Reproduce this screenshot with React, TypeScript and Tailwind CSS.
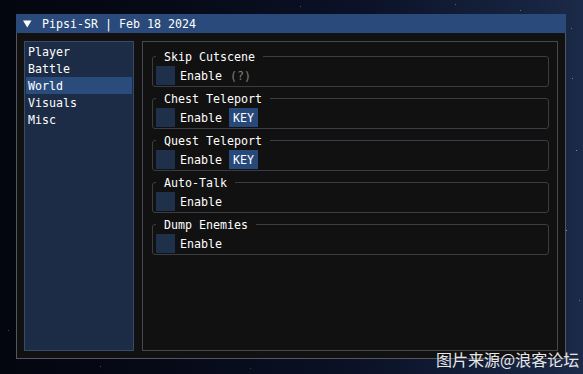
import React from "react";

const mono = { fontFamily: '"DejaVu Sans Mono", "Liberation Mono", monospace' };

const items = ["Player", "Battle", "World", "Visuals", "Misc"];

type Group = { title: string; extra?: "help" | "key" };
const groups: Group[] = [
  { title: "Skip Cutscene", extra: "help" },
  { title: "Chest Teleport", extra: "key" },
  { title: "Quest Teleport", extra: "key" },
  { title: "Auto-Talk" },
  { title: "Dump Enemies" },
];

const stars: [number, number, number][] = [
  [548, 52, 0.5], [572, 78, 0.4], [520, 10, 0.35], [576, 150, 0.45], [566, 230, 0.5],
  [579, 300, 0.35], [455, 4, 0.3], [300, 6, 0.25], [571, 28, 0.3], [8, 330, 0.25],
  [560, 340, 0.4], [100, 366, 0.25], [250, 368, 0.2],
];

export default function App() {
  return (
    <div
      className="relative w-[583px] h-[374px] overflow-hidden pt-[14px] pl-[16px] bg-[linear-gradient(90deg,#04060f_0%,#060a18_30%,#0b1227_62%,#16233f_90%,#1b2a48_100%)]"
      style={mono}
    >
      {stars.map(([x, y, o], i) => (
        <div
          key={i}
          className="absolute w-[1px] h-[1px] bg-white"
          style={{ left: x, top: y, opacity: o }}
        />
      ))}
      <div className="relative w-[550px] flex flex-col text-[11.63px] text-white">
        <div className="h-[19px] bg-[#294a7a] flex items-center">
          <svg className="ml-[7px] w-[9px] h-[8px]" viewBox="0 0 9 8">
            <polygon points="0,0.5 8.5,0.5 4.25,7.5" fill="#ffffff" />
          </svg>
          <span className="ml-[10px] h-[19px] pt-[1px] leading-[19px] whitespace-pre">Pipsi-SR | Feb 18 2024</span>
        </div>
        <div className="h-[326px] border border-t-0 border-[#55555f] bg-[#111111] px-[7px] pt-[8px] pb-[7px] flex gap-[8px]">
          <div className="w-[110px] h-[310px] border border-[#3b4a65] bg-[#1d2c46] p-[1px] flex flex-col">
            {items.map((it) => (
              <div
                key={it}
                className={
                  "h-[17px] pt-[1px] leading-[16px] px-[2px] " + (it === "World" ? "bg-[#2a4c7c]" : "")
                }
              >
                {it}
              </div>
            ))}
          </div>
          <div className="w-[416px] h-[310px] border border-[#48484f] pl-[9px] pt-[14px] flex flex-col gap-[11px]">
            {groups.map((g) => (
              <div
                key={g.title}
                className="relative w-[397px] h-[31px] border border-[#3c3c44] rounded-[3px] pt-[9px] pl-[3px] flex items-start"
              >
                <span className="absolute left-[3px] top-[-6px] px-[8px] leading-[12px] bg-[#111111] whitespace-pre">
                  {g.title}
                </span>
                <div className="w-[19px] h-[19px] bg-[#1e304a]" />
                <span className="ml-[5px] pt-[1px] leading-[18px]">Enable</span>
                {g.extra === "help" && (
                  <span className="ml-[8px] pt-[1px] leading-[18px] text-[#808080]">(?)</span>
                )}
                {g.extra === "key" && (
                  <span className="ml-[7px] h-[19px] pt-[1px] leading-[18px] px-[4px] bg-[#27497a]">KEY</span>
                )}
              </div>
            ))}
          </div>
        </div>
      </div>
      <div
        className="absolute left-[436px] top-[349px] leading-[20px] text-[16px] text-[#e6e6e6] whitespace-nowrap"
        style={{ fontFamily: '"Noto Sans CJK SC", "Noto Sans", sans-serif' }}
      >
        图片来源@浪客论坛
      </div>
    </div>
  );
}
